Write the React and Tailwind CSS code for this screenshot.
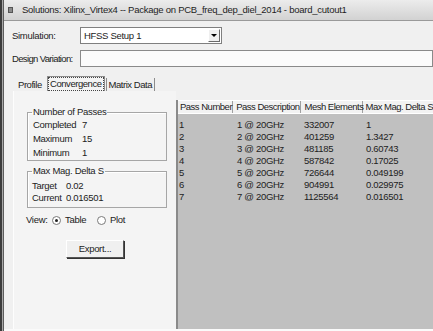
import React from 'react';

const rows = [
    ['1', '1 @ 20GHz', '332007', '1'],
    ['2', '2 @ 20GHz', '401259', '1.3427'],
    ['3', '3 @ 20GHz', '481185', '0.60743'],
    ['4', '4 @ 20GHz', '587842', '0.17025'],
    ['5', '5 @ 20GHz', '726644', '0.049199'],
    ['6', '6 @ 20GHz', '904991', '0.029975'],
    ['7', '7 @ 20GHz', '1125564', '0.016501'],
];

const Radio = ({ checked }) => (
    <span className="w-[9px] h-[9px] rounded-full border border-[#7a7a7a] bg-white flex items-center justify-center shrink-0">
        {checked && <span className="w-[3px] h-[3px] rounded-full bg-[#222]" />}
    </span>
);

export default function App() {
    return (
        <div className="w-[433px] h-[331px] overflow-hidden flex bg-[#f0f0f0] font-['Liberation_Sans',Arial,sans-serif] text-[9.5px] tracking-[-0.3px] text-[#222] leading-none">
            {/* window frame */}
            <div className="w-[2px] shrink-0 bg-[#3c3c3c]" />
            <div className="w-[1px] shrink-0 bg-[#a8a8a8]" />
            <div className="w-[1px] shrink-0 bg-[#5c5c5c]" />

            <div className="flex-1 min-w-0 flex flex-col">
                {/* Title bar */}
                <div className="h-[21px] shrink-0 flex items-center bg-gradient-to-b from-[#ececec] to-[#d2d2d2] border-b border-[#9a9a9a]">
                    <span className="ml-[4px] w-[5px] h-[6px] bg-[#8a8a8a] border border-[#555]" />
                    <span className="ml-[9px] text-[9.5px] tracking-[-0.25px] whitespace-nowrap text-[#1e1e1e]">
                        Solutions: Xilinx_Virtex4 -- Package on PCB_freq_dep_diel_2014 - board_cutout1
                    </span>
                </div>

                {/* Simulation */}
                <div className="mt-[6px] h-[17px] shrink-0 flex items-center">
                    <span className="w-[76px] pl-[8px]">Simulation:</span>
                    <div className="w-[142px] h-[17px] flex items-center bg-white border border-[#7f7f7f]">
                        <span className="flex-1 pl-[3px]">HFSS Setup 1</span>
                        <span className="w-[12px] h-[13px] mr-[1px] flex items-center justify-center bg-[#efefef] border border-t-white border-l-white border-b-[#6a6a6a] border-r-[#6a6a6a]">
                            <span className="w-0 h-0 border-l-[3px] border-r-[3px] border-t-[3px] border-l-transparent border-r-transparent border-t-black" />
                        </span>
                    </div>
                </div>

                {/* Design Variation */}
                <div className="mt-[6px] h-[17px] shrink-0 flex items-center">
                    <span className="w-[76px] pl-[8px] whitespace-nowrap tracking-[-0.65px]">Design Variation:</span>
                    <div className="w-[353px] h-[17px] bg-[#fbfbfb] border border-[#8a8a8a]" />
                </div>

                {/* Tabs */}
                <div className="mt-[8px] h-[16px] shrink-0 flex items-end pl-[12px] tracking-[-0.45px]">
                    <span className="h-[13px] px-[2px] flex items-center">Profile</span>
                    <span className="ml-[3px] h-[15px] w-[58px] flex items-center justify-center bg-[#f4f4f4] border border-b-0 border-[#8c8c8c]">
                        <span className="px-[1px] py-[1px] border border-dotted border-[#444] whitespace-nowrap">Convergence</span>
                    </span>
                    <span className="ml-[1px] h-[13px] w-[49px] flex items-center justify-center border-x border-[#8c8c8c] whitespace-nowrap">Matrix Data</span>
                </div>

                {/* Panel */}
                <div className="flex-1 min-h-0 flex border-b-[2px] border-[#fafafa]">
                    {/* Left pane */}
                    <div className="w-[163px] shrink-0 ml-[9px] border-l border-[#fdfdfd] bg-[#f4f4f4] flex flex-col">
                        <fieldset className="mt-[16px] ml-[13px] w-[140px] border border-[#a6a6a6] shadow-[inset_1px_1px_0_#fff]">
                            <legend className="ml-[4px] px-[1px] h-[10px] leading-[10px]">Number of Passes</legend>
                            <div className="pl-[5px] pt-[1px]">
                                {[['Completed', '7'], ['Maximum', '15'], ['Minimum', '1']].map(([k, v]) => (
                                    <div key={k} className="h-[14px] flex items-center">
                                        <span className="w-[49px]">{k}</span>
                                        <span>{v}</span>
                                    </div>
                                ))}
                            </div>
                        </fieldset>

                        <fieldset className="mt-[5px] ml-[13px] w-[140px] pb-[3px] border border-[#a6a6a6] shadow-[inset_1px_1px_0_#fff]">
                            <legend className="ml-[4px] px-[1px] h-[10px] leading-[10px]">Max Mag. Delta S</legend>
                            <div className="pl-[4px] pt-[4px]">
                                {[['Target', '0.02'], ['Current', '0.016501']].map(([k, v]) => (
                                    <div key={k} className="h-[12px] flex items-center">
                                        <span className="w-[34px]">{k}</span>
                                        <span>{v}</span>
                                    </div>
                                ))}
                            </div>
                        </fieldset>

                        <div className="mt-[6px] h-[12px] flex items-center pl-[12px]">
                            <span className="w-[26px]">View:</span>
                            <Radio checked />
                            <span className="ml-[4px] w-[32px]">Table</span>
                            <Radio />
                            <span className="ml-[4px]">Plot</span>
                        </div>

                        <button className="mt-[14px] ml-[52px] w-[58px] h-[18px] flex items-center justify-center bg-[#f0f0f0] border border-t-white border-l-white border-r-[#555] border-b-[#555] shadow-[1px_1px_0_#333]">
                            Export...
                        </button>
                    </div>

                    {/* Table */}
                    <div className="flex-1 min-w-0 mt-[9px] flex flex-col bg-[#c0c0c0] border-l-[2px] border-[#8a8a8a]">
                        <div className="h-[14px] shrink-0 flex bg-[#f2f2f2] border-t border-white border-b border-[#a0a0a0] whitespace-nowrap tracking-[-0.5px]">
                            <span className="w-[56px] pl-[2px] flex items-center border-r border-[#a0a0a0]">Pass Number</span>
                            <span className="w-[68px] pl-[3px] flex items-center border-r border-[#a0a0a0]">Pass Description</span>
                            <span className="w-[62px] pl-[4px] flex items-center border-r border-[#a0a0a0]">Mesh Elements</span>
                            <span className="flex-1 pl-[3px] flex items-center">Max Mag. Delta S</span>
                        </div>
                        <div className="pt-[5px]">
                            {rows.map((r) => (
                                <div key={r[0]} className="h-[12px] flex items-center whitespace-nowrap">
                                    <span className="w-[59px] pl-[1px]">{r[0]}</span>
                                    <span className="w-[67px]">{r[1]}</span>
                                    <span className="w-[62px]">{r[2]}</span>
                                    <span>{r[3]}</span>
                                </div>
                            ))}
                        </div>
                    </div>
                </div>
            </div>
        </div>
    );
}
